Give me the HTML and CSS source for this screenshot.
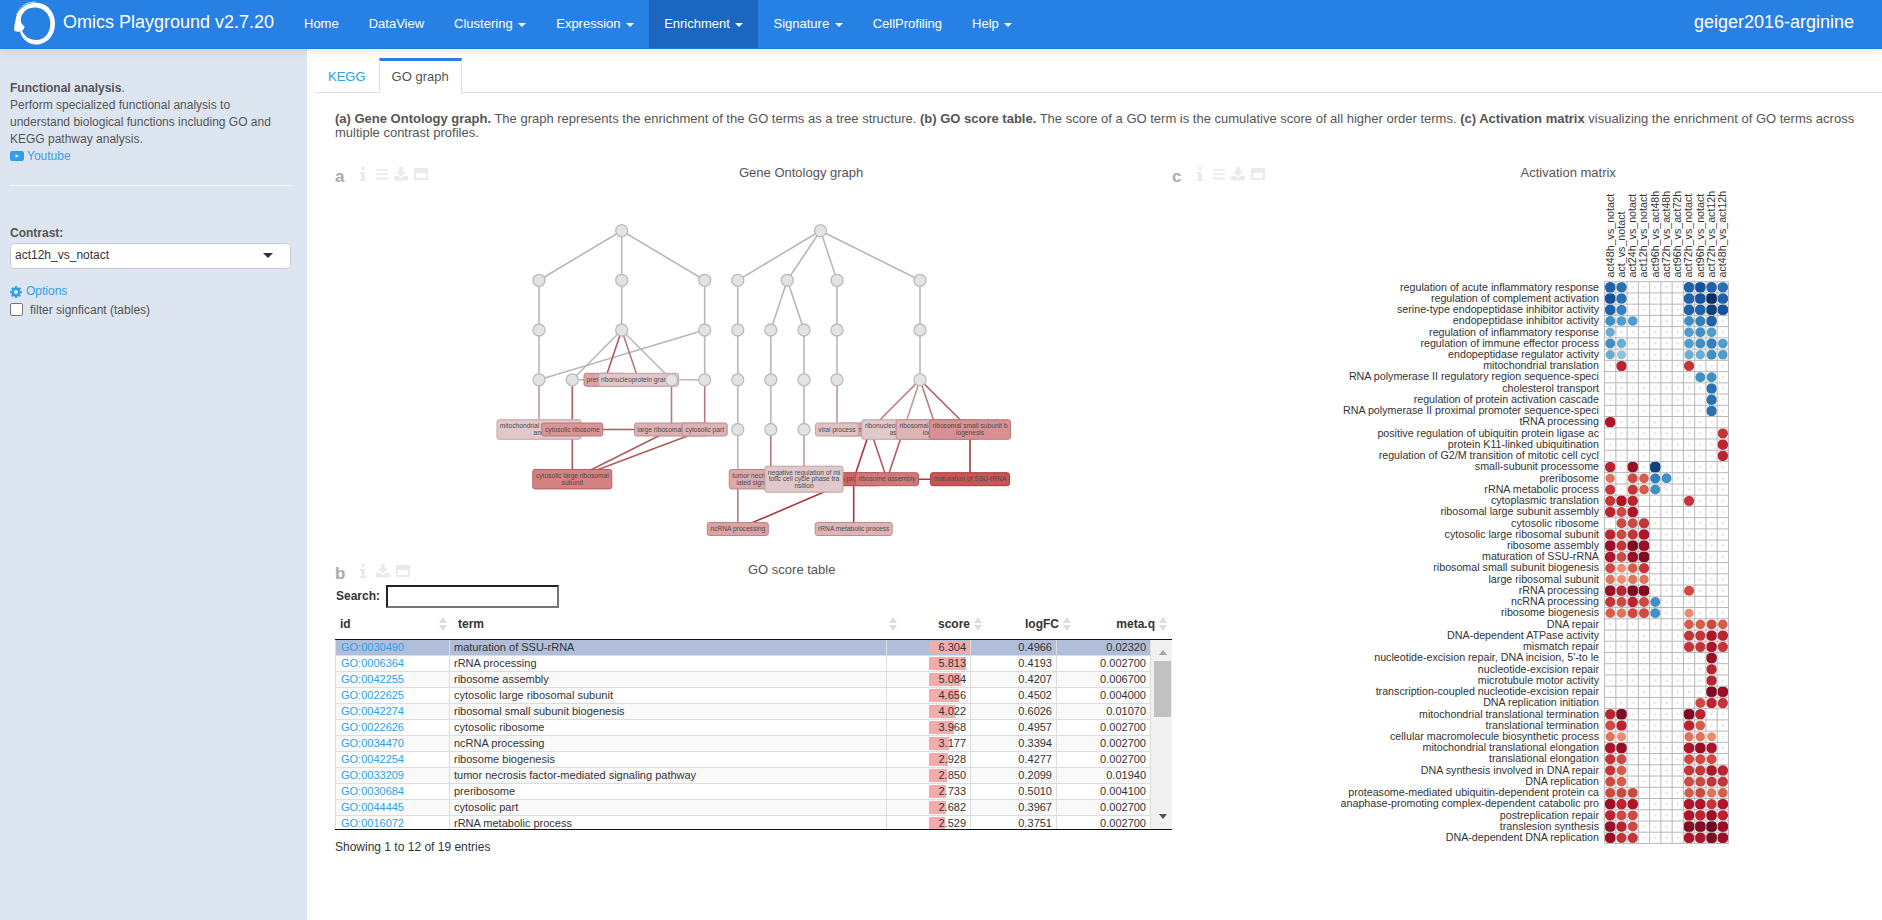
FILE: index.html
```html
<!DOCTYPE html>
<html lang="en">
<head>
<meta charset="utf-8">
<title>Omics Playground</title>
<link rel="stylesheet" href="styles.css">
</head>
<body>
<svg width="0" height="0" class="defs">
  <symbol id="info" viewBox="0 0 6 14"><path d="M1.5 0h3v3h-3zM0 5h4.6v7H6v2H0v-2h1.4V7H0z"/></symbol>
  <symbol id="bars" viewBox="0 0 12 14"><path d="M0 2h12v1.8H0zM0 6.3h12v1.8H0zM0 10.6h12v1.8H0z"/></symbol>
  <symbol id="down" viewBox="0 0 14 14"><path d="M5.2 0h3.6v4.6h3.4L7 9.6 1.8 4.6h3.4zM0 9h4.4L7 11.3 9.6 9H14v4.6H0z"/></symbol>
  <symbol id="win" viewBox="0 0 14 14"><path fill-rule="evenodd" d="M1.2 1h11.6q1.2 0 1.2 1.2v9.6q0 1.2-1.2 1.2H1.2Q0 13 0 11.8V2.2Q0 1 1.2 1zM2 6v5h10V6z"/></symbol>
</svg>
<header class="navbar">
  <svg class="logo" viewBox="0 0 42 44" width="42" height="44">
    <path fill="#fff" d="M19 2C31 0 41 9.500 41 22.500S32 43.500 22 43.500C14 43.500 8 38 6 30.500Q0 31.500 0 28 .5 24 1.500 19C3 10 9 3.500 19 2zM21 6.500C13.500 6.500 9 10.500 7 16.500Q6.500 20 7.500 22.500L10.500 25.500Q10.500 28.500 8 29.800C10.500 35.500 15.500 39 22 39 31 39 36.300 31.500 36.300 22.500S30 6.500 21 6.500z"/>
    <path fill="none" stroke="#fff" stroke-width=".8" opacity=".6" d="M2 14Q7 2 20 1M8 5Q14 1 22 .8"/>
  </svg>
  <span class="brand">Omics Playground v2.7.20</span>
  <nav class="menu">
    <a>Home</a><a>DataView</a><a>Clustering<i class="caret"></i></a><a>Expression<i class="caret"></i></a><a class="active">Enrichment<i class="caret"></i></a><a>Signature<i class="caret"></i></a><a>CellProfiling</a><a>Help<i class="caret"></i></a>
  </nav>
  <span class="dataset">geiger2016-arginine</span>
</header>
<div class="page">
  <aside class="sidebar">
    <p class="about"><b>Functional analysis</b>.<br>Perform specialized functional analysis to<br>understand biological functions including GO and<br>KEGG pathway analysis.<br><a><svg class="yt" width="14" height="10" viewBox="0 0 14 10"><path fill-rule="evenodd" d="M2 0h10q2 0 2 2v6q0 2-2 2H2Q0 10 0 8V2Q0 0 2 0zM5.500 3v4L9 5z"/></svg>Youtube</a></p>
    <hr>
    <div class="label">Contrast:</div>
    <div class="select"><span>act12h_vs_notact</span><i></i></div>
    <a class="options"><svg width="12" height="12" viewBox="0 0 12 12"><path fill-rule="evenodd" d="M5 0h2l.4 1.700 1 .4L10 1.200 11 2.400l-1 1.500.4 1L12 5.200v1.800l-1.700.3-.4 1L10.800 9.800 9.600 11 8.200 10l-1 .4L7 12H5l-.3-1.600-1-.4L2.200 10.900 1.100 9.700 2 8.300l-.4-1L0 7V5.200l1.700-.3.4-1L1.200 2.400 2.400 1.200l1.400.9 1-.4zM6 4a2 2 0 1 0 0 4 2 2 0 0 0 0-4z"/></svg>Options</a>
    <div class="check"><span class="box"></span>filter signficant (tables)</div>
  </aside>
  <main class="main">
    <div class="tabs"><a>KEGG</a><a class="on">GO graph</a></div>
    <p class="caption"><b>(a) Gene Ontology graph.</b> The graph represents the enrichment of the GO terms as a tree structure. <b>(b) GO score table.</b> The score of a GO term is the cumulative score of all higher order terms. <b>(c) Activation matrix</b> visualizing the enrichment of GO terms across multiple contrast profiles.</p>
    <div class="panels">
      <div class="left">
        <div class="phead"><span class="letter">a</span><span class="tools"><svg width="6" height="14"><use href="#info"/></svg><svg width="12" height="14"><use href="#bars"/></svg><svg width="14" height="14"><use href="#down"/></svg><svg width="14" height="14"><use href="#win"/></svg></span><span class="ptitle ta">Gene Ontology graph</span></div>
        <svg id="graph" class="graph" width="837" height="362" viewBox="335 187 837 362"></svg>
        <div class="phead pb"><span class="letter">b</span><span class="tools"><svg width="6" height="14"><use href="#info"/></svg><svg width="14" height="14"><use href="#down"/></svg><svg width="14" height="14"><use href="#win"/></svg></span><span class="ptitle tb">GO score table</span></div>
        <div class="search"><b>Search:</b><span class="field"></span></div>
        <div class="thead"><span class="h1">id<i class="sort"></i></span><span class="h2">term<i class="sort"></i></span><span class="h3">score<i class="sort"></i></span><span class="h4">logFC<i class="sort"></i></span><span class="h5">meta.q<i class="sort"></i></span></div>
        <div class="tbody"><div id="rows" class="rows"></div>
          <div class="scroll"><i class="up"></i><i class="thumb"></i><i class="dn"></i></div></div>
        <div class="count">Showing 1 to 12 of 19 entries</div>
      </div>
      <div class="right">
        <div class="phead"><span class="letter">c</span><span class="tools"><svg width="6" height="14"><use href="#info"/></svg><svg width="12" height="14"><use href="#bars"/></svg><svg width="14" height="14"><use href="#down"/></svg><svg width="14" height="14"><use href="#win"/></svg></span><span class="ptitle tc">Activation matrix</span></div>
        <svg id="matrix" class="matrix" width="710" height="670" viewBox="1172 187 710 670"></svg>
      </div>
    </div>
  </main>
</div>
<script src="app.js"></script>
</body>
</html>
```
FILE: styles.css
```css
*{box-sizing:border-box}
body{margin:0;height:920px;overflow:hidden;font:12px/17px "Liberation Sans",Arial,sans-serif;color:#555;background:#fff;display:flex;flex-direction:column}
.defs{display:none}
a{color:#2fa0e8}
.navbar{height:49px;flex:none;background:#2780e3;border-bottom:1px solid #1d7fd0;box-shadow:0 1px 10px rgba(0,0,0,.12);display:flex;align-items:center;color:#fff;padding-left:14px;position:relative;z-index:1}
.logo{flex:none;margin-top:-3px}
.brand{font-size:18px;margin:-4px 0 0 7px;width:226px;white-space:nowrap}
.menu{display:flex;height:48px}
.menu a{color:#fff;font-size:13px;padding:0 15px 2px;display:flex;align-items:center;height:48px}
.menu a.active{background:#1967be}
.caret{border:4px solid transparent;border-top-color:#fff;border-bottom:0;margin:3px 0 0 5.6px}
.dataset{font-size:18px;margin:-4px 28px 0 auto}
.page{display:flex;flex:1}
.sidebar{width:307px;flex:none;background:#dde5f0;padding:31px 16px 0 10px;display:flex;flex-direction:column}
.about{margin:0;white-space:nowrap}
.about svg,.options svg{fill:#2fa0e8}
.yt{margin-right:3px;vertical-align:-1px}
hr{width:100%;border:0;border-top:1px solid #eef1f6;margin:20px 0 39px}
.label{font-weight:bold;margin-bottom:1px}
.select{height:26px;background:#fff;border:1px solid #ccc;border-radius:4px;display:flex;align-items:center;justify-content:space-between;padding:0 17px 2px 4px;color:#333}
.select i{border:5px solid transparent;border-top-color:#333;border-bottom:0}
.options{margin-top:14px;display:flex;align-items:center;gap:4px}
.check{margin-top:2px;display:flex;align-items:center}
.box{width:13px;height:13px;border:1px solid #767676;border-radius:2px;background:#fff;margin:-3px 7px 0 0}
.main{flex:1;padding:9px 0 0 8px}
.tabs{display:flex;height:35px;border-bottom:1px solid #ddd;font-size:13px}
.tabs a{height:35px;padding:10px 13px 0 13px}
.tabs .on{color:#555;background:#fff;border:1px solid #ddd;border-top:3px solid #2780e3;border-bottom:0;padding:7px 12px}
.caption{margin:19px 20px 0;font-size:13px;line-height:14px}
.panels{display:flex;padding:21px 0 0 20px}
.left{width:837px;flex:none}
.right{flex:1}
.phead{height:26px;display:flex;position:relative}
.letter{font-size:17px;font-weight:bold;color:#aaa;width:25px;line-height:31px}
.tools{display:flex;gap:6px;padding-top:6px;fill:#eaeaec}
.tools svg:first-child{margin-right:4px}
.ptitle{font-size:13px;position:absolute;top:3px}
.ta{left:404px}.tb{left:413px}.tc{left:348.500px}
.graph,.matrix{display:block}
.graph text{font-size:6.65px;fill:#4c4c4c;text-anchor:middle}
.matrix text{font-size:10.7px;fill:#333}
.pb{margin-top:9px;height:27px}
.search{display:flex;align-items:center;height:23px;color:#333;padding-left:1px}
.field{width:173px;height:23px;border:2px inset #767676;margin-left:6px}
.thead{display:flex;height:32px;border-bottom:1px solid #111;font-weight:bold;color:#333;line-height:34px;padding-top:1px}
.thead span{display:flex;justify-content:flex-end;align-items:center}
.sort{width:8px;height:14px;background:#ddd;clip-path:polygon(50% 0,100% 43%,0 43%,0 57%,100% 57%,50% 100%,0 57%,0 43%);margin-left:4px}
.h1,.h2{justify-content:space-between!important}
.h1{width:114px;padding:0 2px 0 5px}.h2{width:450px;padding:0 2px 0 9px}
.h3{width:83px}.h4{width:89px}.h5{width:96px}
.tbody{display:flex;height:190px;border-bottom:1px solid #111;overflow:hidden}
.rows{width:816px}
.row{display:flex;height:16px;border-bottom:1px solid #ddd;font-size:11px;line-height:15px;color:#333}
.row span{border-right:1px solid #ddd;padding:0 4px;text-align:right}
.row:nth-child(odd){background:#f9f9f9}
.row.sel{background:#b0bed9}
.row .c1{width:115px;padding-left:5px;text-align:left;color:#2fa0e8;border-left:1px solid #ddd}
.row .c2{width:437px;text-align:left}
.row .c3{width:84px;background-position:42px 1px;background-repeat:no-repeat}
.row .c4{width:86px}.row .c5{width:94px}
.scroll{width:21px;background:#f1f1f1;padding:10px 0 10px 2px;display:flex;flex-direction:column;align-items:center}
.scroll i{flex:none}
.up{border:4.5px solid transparent;border-bottom:5px solid #a3a3a3;border-top:0}
.thumb{width:17px;height:56px;background:#c1c1c1;margin-top:6px}
.dn{border:4.5px solid transparent;border-top:5px solid #505050;border-bottom:0;margin-top:auto}
.count{margin-top:9px;color:#333}
```
FILE: app.js
```js
const NS = 'http://www.w3.org/2000/svg';
function el(parent, tag, attrs, text) {
  const n = document.createElementNS(NS, tag);
  for (const k in attrs) n.setAttribute(k, attrs[k]);
  if (text !== undefined) n.textContent = text;
  parent.appendChild(n);
  return n;
}

// Ontology graph
const g = document.getElementById('graph');
const Y = [230.7, 280.3, 330, 379.8, 429.5, 479.2, 529];
const G = '#b8b8b8', P = '#c09a9c', M = '#b87a7c', R = '#b25a5d', D = '#a9383d';
const edges = [
  [621.7,0,539,1,G],[621.7,0,621.7,1,G],[621.7,0,704.7,1,G],[539,1,539,3,G],[621.7,1,621.7,2,G],[704.7,1,704.7,3,G],
  [704.7,2,539,3,G],[621.7,2,572.3,3,G],[621.7,2,671.5,3,G],[572.3,3,704.7,3,G],[621.7,2,605,3,R],[621.7,2,638.5,3,M],
  [539,3,539,4,P],[572.3,3,572.3,5,R],[572.3,4,671.5,4,R],[671.5,3,671.5,4,M],[704.7,3,704.7,4,M],[671.5,4,572.3,5,R],[704.7,4,572.3,5,R],
  [820.5,0,737.8,1,G],[820.5,0,787.3,1,G],[820.5,0,837,1,G],[820.5,0,920,1,G],[737.8,1,737.8,5,G],[787.3,1,770.8,2,G],[787.3,1,804,2,G],
  [770.8,2,770.8,4,G],[804,2,804,4,G],[837,1,837,3,G],[920,1,920,3,G],[770.8,4,770.8,5,M],[804,4,804,5,P],[837,3,837,4,P],
  [920,3,870.3,4,M],[920,3,903.7,4,P],[920,3,936.7,4,M],[920,3,970,4,R],[870.3,4,853.7,5,D],[870.3,4,887,5,R],[903.7,4,887,5,R],
  [970,4,970,5,D],[853.7,5,970,5,D],[853.7,5,853.7,6,D],[853.7,5,737.8,6,D],[737.8,5,737.8,6,M]
];
for (const [a, i, b, j, c] of edges) el(g, 'line', {x1: a, y1: Y[i], x2: b, y2: Y[j], stroke: c, 'stroke-width': 1.6});
function circle(x, i) { el(g, 'circle', {cx: x, cy: Y[i], r: 6, fill: '#e3e3e3', stroke: '#bbb', 'stroke-width': 1.3}); }
[[621.7,0],[539,1],[621.7,1],[704.7,1],[539,2],[621.7,2],[704.7,2],[539,3],[572.3,3],[704.7,3],
 [820.5,0],[737.8,1],[787.3,1],[837,1],[920,1],[737.8,2],[770.8,2],[804,2],[837,2],[920,2],
 [737.8,3],[770.8,3],[804,3],[837,3],[920,3],[737.8,4],[770.8,4],[804,4]].forEach(c => circle(...c));
const boxes = [
  [605,3,42,'#dba5a7','#b98586',['preribosome']],
  [638.5,3,80,'#e0c8ca','#c0a0a2',['ribonucleoprotein granule']],
  [539,4,84,'#e2c8ca','#c0a0a2',['mitochondrial inner membr','ane']],
  [572.3,4,61,'#d99495','#b87678',['cytosolic ribosome']],
  [671.5,4,74,'#dcb1b3','#bb8d8f',['large ribosomal subunit']],
  [704.7,4,45,'#deb3b5','#bb8d8f',['cytosolic part']],
  [572.3,5,79,'#d48182','#b45e60',['cytosolic large ribosomal','subunit']],
  [770.8,5,83,'#dbaaac','#b98586',['tumor necrosis factor-med','iated signaling pathway']],
  [853.7,5,53,'#ce6466','#b04a4c',['rRNA processing']],
  [804,5,78,'#e1c8ca','#c0a0a2',['negative regulation of mi','totic cell cycle phase tra','nsition']],
  [887,5,63,'#d37879','#b45e60',['ribosome assembly']],
  [970,5,79,'#ca5456','#ac3a3c',['maturation of SSU-rRNA']],
  [870.3,4,62,'#dba8aa','#b98586',['ribosome biogenesis']],
  [837,4,43,'#e0c2c4','#c0a0a2',['viral process']],
  [903.7,4,84,'#e1c8ca','#c0a0a2',['ribonucleoprotein complex',' assembly']],
  [936.7,4,81,'#deb5b7','#bb8d8f',['ribosomal large subunit b','iogenesis']],
  [970,4,81,'#d89092','#b87678',['ribosomal small subunit b','iogenesis']],
  [737.8,6,61,'#dba2a4','#b98586',['ncRNA processing']],
  [853.7,6,77,'#deb5b7','#bb8d8f',['rRNA metabolic process']]
];
for (const [x, i, w, fill, stroke, lines] of boxes) {
  const h = [0, 13, 19.5, 26][lines.length];
  el(g, 'rect', {x: x - w / 2, y: Y[i] - h / 2, width: w, height: h, rx: 2.2, fill, stroke, 'stroke-width': 1});
  lines.forEach((t, k) => el(g, 'text', {x, y: Y[i] + 2.1 + (k - (lines.length - 1) / 2) * 6.7}, t));
}
circle(671.5, 3);

// Score table
const data = [
  ['0030490','maturation of SSU-rRNA','6.304','0.4966','0.02320',40],['0006364','rRNA processing','5.813','0.4193','0.002700',37],
  ['0042255','ribosome assembly','5.084','0.4207','0.006700',32],['0022625','cytosolic large ribosomal subunit','4.656','0.4502','0.004000',30],
  ['0042274','ribosomal small subunit biogenesis','4.022','0.6026','0.01070',26],['0022626','cytosolic ribosome','3.968','0.4957','0.002700',25],
  ['0034470','ncRNA processing','3.177','0.3394','0.002700',20],['0042254','ribosome biogenesis','2.928','0.4277','0.002700',19],
  ['0033209','tumor necrosis factor-mediated signaling pathway','2.850','0.2099','0.01940',18],['0030684','preribosome','2.733','0.5010','0.004100',17],
  ['0044445','cytosolic part','2.682','0.3967','0.002700',17],['0016072','rRNA metabolic process','2.529','0.3751','0.002700',16]
];
document.getElementById('rows').innerHTML = data.map((d, i) =>
  `<div class="row${i ? '' : ' sel'}"><span class="c1">GO:${d[0]}</span><span class="c2">${d[1]}</span>` +
  `<span class="c3" style="background-image:linear-gradient(#f5abab,#f5abab);background-size:${d[5]}px 13px">${d[2]}</span>` +
  `<span class="c4">${d[3]}</span><span class="c5">${d[4]}</span></div>`).join('');

// Activation matrix: digits are positive levels, letters negative ones
const m = document.getElementById('matrix');
const X0 = 1604.6, Y0 = 281.7, CW = 11.26, CH = 11.235;
const red = ['#ec8b6e','#e0745b','#d75d4a','#cb4a42','#c23539','#b92430','#ae152b','#990f28','#7f0a22','#6a0320'];
const blue = ['#8ec1dc','#6bacd1','#509dcb','#4090c3','#3480ba','#2971b2','#1f62a9','#16529a','#0f427a','#0a2f62'];
const cols = ['act48h_vs_notact','act_vs_notact','act24h_vs_notact','act12h_vs_notact','act96h_vs_act48h','act72h_vs_act48h','act96h_vs_act72h','act72h_vs_notact','act96h_vs_notact','act72h_vs_act12h','act48h_vs_act12h'];
const terms = `regulation of acute inflammatory response|gf.....ghgf
regulation of complement activation|hf.....ghjg
serine-type endopeptidase inhibitor activity|ge.....ggih
endopeptidase inhibitor activity|dcc....deg.
regulation of inflammatory response|b......cdc.
regulation of immune effector process|db.....cdec
endopeptidase regulator activity|ba.....bbdc
mitochondrial translation|.6.....5...
RNA polymerase II regulatory region sequence-speci|........dd.
cholesterol transport|.........f.
regulation of protein activation cascade|.........f.
RNA polymerase II proximal promoter sequence-speci|.........f.
tRNA processing|7..........
positive regulation of ubiquitin protein ligase ac|..........5
protein K11-linked ubiquitination|..........6
regulation of G2/M transition of mitotic cell cycl|..........6
small-subunit processome|6.8.i......
preribosome|2.43ed.....
rRNA metabolic process|5.53d......
cytoplasmic translation|576....5...
ribosomal large subunit assembly|647........
cytosolic ribosome|.445.......
cytosolic large ribosomal subunit|6457.......
ribosome assembly|8598.......
maturation of SSU-rRNA|7489.......
ribosomal small subunit biogenesis|4135.......
large ribosomal subunit|2122.......
rRNA processing|8699...4...
ncRNA processing|5464d......
ribosome biogenesis|3244d..1...
DNA repair|.......3343
DNA-dependent ATPase activity|.......5576
mismatch repair|.......5575
nucleotide-excision repair, DNA incision, 5'-to le|.........8.
nucleotide-excision repair|.........6.
microtubule motor activity|.........6.
transcription-coupled nucleotide-excision repair|.........98
DNA replication initiation|........465
mitochondrial translational termination|69.....96..
translational termination|46.....63..
cellular macromolecule biosynthetic process|21.....221.
mitochondrial translational elongation|78.....787.
translational elongation|54.....444.
DNA synthesis involved in DNA repair|53.....5576
DNA replication|43.....4455
proteasome-mediated ubiquitin-dependent protein ca|444....3423
anaphase-promoting complex-dependent catabolic pro|867....7757
postreplication repair|644....7686
translesion synthesis|864....99X8
DNA-dependent DNA replication|855....7798`.split('\n');
cols.forEach((c, i) => el(m, 'text', {transform: `translate(${X0 + (i + .5) * CW + 3.4} 277.5) rotate(-90)`}, c));
terms.forEach((t, r) => {
  const [name, v] = t.split('|');
  const cy = Y0 + (r + .5) * CH;
  el(m, 'text', {x: 1599, y: cy + 3.3, 'text-anchor': 'end'}, name);
  [...v].forEach((ch, c) => {
    const cx = X0 + (c + .5) * CW;
    if (ch === '.') return el(m, 'circle', {cx, cy, r: 1.4, fill: '#e8e8e8'});
    const pos = /[0-9X]/.test(ch);
    const lv = pos ? (ch === 'X' ? 9 : +ch - 1) : ch.charCodeAt(0) - 97;
    el(m, 'circle', {cx, cy, r: 4.5 + lv * .16, fill: (pos ? red : blue)[lv]});
  });
});
for (let i = 0; i <= 11; i++) el(m, 'line', {x1: X0 + i * CW, x2: X0 + i * CW, y1: Y0, y2: Y0 + 50 * CH, stroke: '#b8b8b8', 'stroke-width': 1});
for (let i = 0; i <= 50; i++) el(m, 'line', {x1: X0, x2: X0 + 11 * CW, y1: Y0 + i * CH, y2: Y0 + i * CH, stroke: '#b8b8b8', 'stroke-width': 1});
```
